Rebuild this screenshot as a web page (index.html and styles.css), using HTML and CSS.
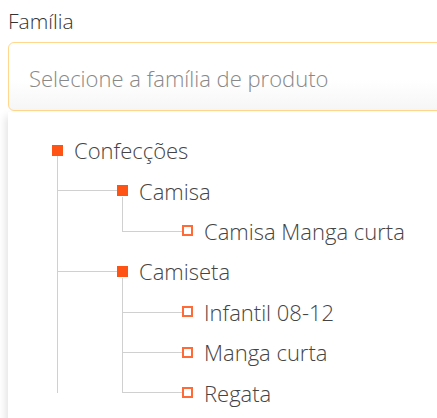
FILE: index.html
```html
<!DOCTYPE html>
<html lang="pt">
<head>
<meta charset="utf-8">
<link rel="stylesheet" href="styles.css">
</head>
<body>
<div class="field">
  <label class="label">Família</label>
  <div class="input">Selecione a família de produto</div>
  <div class="dropdown">
    <ul class="tree root">
      <li class="node">
        <div class="row"><span class="sq filled"></span><span class="txt">Confecções</span></div>
        <ul class="tree">
          <li class="node">
            <div class="row"><span class="sq filled"></span><span class="txt">Camisa</span></div>
            <ul class="tree">
              <li class="node"><div class="row"><span class="sq hollow"></span><span class="txt">Camisa Manga curta</span></div></li>
            </ul>
          </li>
          <li class="node">
            <div class="row"><span class="sq filled"></span><span class="txt">Camiseta</span></div>
            <ul class="tree">
              <li class="node"><div class="row"><span class="sq hollow"></span><span class="txt">Infantil 08-12</span></div></li>
              <li class="node"><div class="row"><span class="sq hollow"></span><span class="txt">Manga curta</span></div></li>
              <li class="node"><div class="row"><span class="sq hollow"></span><span class="txt">Regata</span></div></li>
            </ul>
          </li>
        </ul>
      </li>
    </ul>
  </div>
</div>
</body>
</html>
```

FILE: styles.css
```css
html, body {
  margin: 0;
  padding: 0;
  background: #fff;
  overflow: hidden;
}
body {
  padding: 8px;
  font-family: "Open Sans", "Noto Sans", sans-serif;
  font-weight: 300;
  color: #333;
  height: 418px;
  box-sizing: border-box;
}
.field {
  width: 470px;
}
.label {
  display: block;
  font-size: 21px;
  color: #333;
  line-height: 27px;
}
.input {
  margin-top: 7px;
  box-sizing: border-box;
  height: 69px;
  border: 1px solid #ffd88e;
  border-radius: 6px;
  background: linear-gradient(#ffffff 55%, #f6f6f6);
  padding-left: 20px;
  display: flex;
  align-items: center;
  font-size: 22px;
  color: #888;
  padding-top: 3px;
}
.dropdown {
  margin-top: 1px;
  background: #fff;
  box-shadow: -2px 4px 8px rgba(0, 0, 0, 0.12);
  padding: 18px 0 0 44px;
  height: 300px;
}
.tree {
  list-style: none;
  margin: 0;
  padding: 0;
  position: relative;
}
.tree .tree {
  padding-left: 65px;
}
.node > .tree::before {
  content: "";
  position: absolute;
  left: 5px;
  top: -14px;
  bottom: 20px;
  border-left: 1px solid #d0d0d0;
}
.tree .tree > .node {
  position: relative;
}
.tree .tree > .node::before {
  content: "";
  position: absolute;
  left: -60px;
  width: 60px;
  top: 20px;
  border-top: 1px solid #d0d0d0;
}
.row {
  height: 40.4px;
  display: flex;
  align-items: center;
}
.sq {
  width: 11px;
  height: 11px;
  box-sizing: border-box;
  flex: none;
  margin-right: 11px;
}
.filled {
  background: #ff5316;
}
.hollow {
  background: #fff;
  border: 2px solid #ff6a36;
}
.txt {
  font-size: 22px;
  color: #444;
  line-height: 40px;
  white-space: nowrap;
}
```
